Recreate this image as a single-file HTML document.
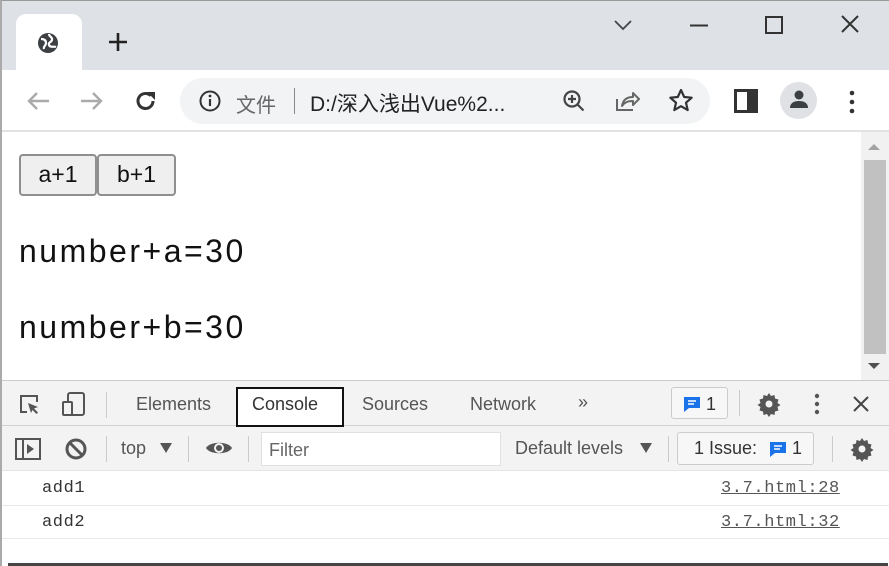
<!DOCTYPE html>
<html><head><meta charset="utf-8"><style>
*{margin:0;padding:0;box-sizing:border-box}
body{width:889px;height:566px;overflow:hidden;background:#fff;font-family:"Liberation Sans","Noto Sans CJK SC",sans-serif;position:relative}
.a{position:absolute}
svg{position:absolute;overflow:visible}
.t{color:#555;font-size:18px}
.m{font-family:'Liberation Mono',monospace;font-size:17px;letter-spacing:0.6px}
</style></head><body>
<div class="a" style="left:0;top:0;width:889px;height:70px;background:#dee1e6"></div>
<div class="a" style="left:0;top:0;width:889px;height:1px;background:#999"></div>
<div class="a" style="left:0;top:0;width:2px;height:566px;background:#aaa;z-index:5"></div>
<div class="a" style="left:16px;top:14px;width:66px;height:60px;background:#fff;border-radius:10px 10px 0 0"></div>
<svg style="left:37px;top:32px" width="22" height="22" viewBox="0 0 22 22"><circle cx="11" cy="11" r="10" fill="#3c4043"/><path d="M4 7c3 0 5 1 5 4s-3 3-2 6M12 2c0 3 4 3 3 6s-4 2-3 5 5 1 7 2" stroke="#fff" stroke-width="2.2" fill="none"/></svg>
<svg style="left:108px;top:32px" width="20" height="20"><path d="M10 1v18M1 10h18" stroke="#222" stroke-width="2.6"/></svg>
<svg style="left:613px;top:19px" width="20" height="12"><path d="M2 2l8 8 8-8" stroke="#444" stroke-width="1.8" fill="none"/></svg>
<svg style="left:690px;top:24px" width="18" height="4"><path d="M0 1.5h18" stroke="#333" stroke-width="2"/></svg>
<svg style="left:765px;top:16px" width="18" height="18"><rect x="1" y="1" width="16" height="16" stroke="#333" stroke-width="2" fill="none"/></svg>
<svg style="left:841px;top:15px" width="18" height="18"><path d="M1 1l16 16M17 1L1 17" stroke="#333" stroke-width="2"/></svg>
<div class="a" style="left:0;top:130px;width:889px;height:2px;background:#e2e2e2"></div>
<svg style="left:26px;top:91px" width="24" height="20"><path d="M23 10H3M11 2l-8 8 8 8" stroke="#aaa" stroke-width="2.4" fill="none"/></svg>
<svg style="left:80px;top:91px" width="24" height="20"><path d="M1 10h20M13 2l8 8-8 8" stroke="#aaa" stroke-width="2.4" fill="none"/></svg>
<svg style="left:134px;top:89px" width="24" height="24"><path d="M19 12a7.5 7.5 0 1 1-2.2-5.3" stroke="#333" stroke-width="3" fill="none"/><path d="M13 3h8v8z" fill="#333"/></svg>
<div class="a" style="left:180px;top:78px;width:530px;height:46px;background:#f1f3f4;border-radius:23px"></div>
<svg style="left:199px;top:90px" width="22" height="22"><circle cx="11" cy="11" r="9.5" stroke="#333" stroke-width="2" fill="none"/><path d="M11 9v7" stroke="#333" stroke-width="2.2"/><circle cx="11" cy="6" r="1.4" fill="#333"/></svg>
<div class="a t" style="left:236px;top:89px;font-size:20px;color:#666">文件</div>
<div class="a" style="left:294px;top:88px;width:1px;height:26px;background:#888"></div>
<div class="a" style="left:310px;top:88px;font-size:21px;color:#222">D:/深入浅出Vue%2...</div>
<svg style="left:562px;top:89px" width="26" height="26"><circle cx="10" cy="10" r="7.5" stroke="#444" stroke-width="2.2" fill="none"/><path d="M15.5 15.5l6 6M10 6v8M6 10h8" stroke="#444" stroke-width="2.2"/></svg>
<svg style="left:615px;top:89px" width="26" height="24"><path d="M2 10v11h16" stroke="#666" stroke-width="2" fill="none"/><path d="M7 17c1-6 5-9 11-9V4l6 6-6 6v-4c-5 0-8 1-11 5z" stroke="#666" stroke-width="2" fill="none" stroke-linejoin="round"/></svg>
<svg style="left:668px;top:88px" width="26" height="26"><path d="M13 2l3.2 7 7.5.7-5.7 5 1.7 7.4L13 18.2l-6.7 3.9L8 14.7l-5.7-5 7.5-.7z" stroke="#333" stroke-width="2.2" fill="none" stroke-linejoin="round"/></svg>
<svg style="left:734px;top:89px" width="24" height="24"><rect x="1.5" y="1.5" width="21" height="21" stroke="#333" stroke-width="3" fill="none"/><rect x="13" y="2" width="9" height="20" fill="#333"/></svg>
<div class="a" style="left:780px;top:82px;width:37px;height:37px;border-radius:50%;background:#dfe1e5"></div>
<svg style="left:789px;top:89px" width="20" height="20"><circle cx="10" cy="6" r="4.5" fill="#3c4043"/><path d="M1 19c0-5 4-7 9-7s9 2 9 7z" fill="#3c4043"/></svg>
<svg style="left:849px;top:90px" width="6" height="24"><circle cx="3" cy="3" r="2.3" fill="#333"/><circle cx="3" cy="12" r="2.3" fill="#333"/><circle cx="3" cy="21" r="2.3" fill="#333"/></svg>
<div class="a" style="left:19px;top:154px;width:78px;height:42px;background:#efefef;border:2px solid #8f8f8f;border-radius:4px;font-size:23px;color:#111;text-align:center;line-height:36px">a+1</div>
<div class="a" style="left:97px;top:154px;width:79px;height:42px;background:#efefef;border:2px solid #8f8f8f;border-radius:4px;font-size:23px;color:#111;text-align:center;line-height:36px">b+1</div>
<div class="a" style="left:19px;top:233px;font-size:32px;color:#111;letter-spacing:2.5px">number+a=30</div>
<div class="a" style="left:19px;top:309px;font-size:32px;color:#111;letter-spacing:2.5px">number+b=30</div>
<div class="a" style="left:861px;top:132px;width:28px;height:248px;background:#f1f1f1"></div>
<div class="a" style="left:864px;top:160px;width:22px;height:194px;background:#c1c1c1"></div>
<svg style="left:868px;top:143px" width="12" height="8"><path d="M0 7L6 1l6 6z" fill="#a3a3a3"/></svg>
<svg style="left:868px;top:362px" width="12" height="8"><path d="M0 1l6 6 6-6z" fill="#505050"/></svg>
<div class="a" style="left:0;top:380px;width:889px;height:1px;background:#ccc"></div>
<div class="a" style="left:0;top:381px;width:889px;height:89px;background:#f3f3f3"></div>
<div class="a" style="left:0;top:425px;width:889px;height:1px;background:#d0d0d0"></div>
<div class="a" style="left:0;top:470px;width:889px;height:1px;background:#e4e4e4"></div>
<svg style="left:18px;top:393px" width="24" height="24"><path d="M9 19H3V3h16v6" stroke="#555" stroke-width="2" fill="none"/><path d="M10 10l10 4-4 1.5 4 4-1.5 1.5-4-4L13 20z" fill="#555"/></svg>
<svg style="left:61px;top:391px" width="26" height="26"><rect x="7" y="2" width="16" height="22" rx="2" stroke="#555" stroke-width="2" fill="none"/><rect x="2" y="11" width="9" height="13" rx="1" stroke="#555" stroke-width="2" fill="#f3f3f3"/></svg>
<div class="a" style="left:106px;top:392px;width:1px;height:26px;background:#ccc"></div>
<div class="a t" style="left:136px;top:394px">Elements</div>
<div class="a" style="left:236px;top:387px;width:108px;height:40px;border:2px solid #111;background:#fff"></div>
<div class="a t" style="left:252px;top:394px;color:#333">Console</div>
<div class="a t" style="left:362px;top:394px">Sources</div>
<div class="a t" style="left:470px;top:394px">Network</div>
<div class="a t" style="left:578px;top:392px">»</div>
<div class="a" style="left:671px;top:387px;width:57px;height:32px;border:1px solid #ccc;border-radius:3px;background:#f7f7f7"></div>
<svg style="left:683px;top:395px" width="18" height="17"><path d="M1 2h16v11H6l-5 4z" fill="#1a73e8"/><path d="M5 6h8M5 9h6" stroke="#fff" stroke-width="1.5"/></svg>
<div class="a t" style="left:706px;top:394px;color:#333">1</div>
<div class="a" style="left:739px;top:390px;width:1px;height:26px;background:#ccc"></div>
<svg style="left:757px;top:392px" width="24" height="24" viewBox="0 0 24 24"><path d="M12 1l2 3 3.5-1 .5 3.5 3.5 1-1 3.5 3 2-3 2 1 3.5-3.5 1-.5 3.5-3.5-1-2 3-2-3-3.5 1-.5-3.5-3.5-1 1-3.5-3-2 3-2-1-3.5 3.5-1 .5-3.5 3.5 1z" fill="#555"/><circle cx="12" cy="12" r="3.5" fill="#f3f3f3"/></svg>
<svg style="left:814px;top:393px" width="6" height="22"><circle cx="3" cy="3" r="2.2" fill="#555"/><circle cx="3" cy="11" r="2.2" fill="#555"/><circle cx="3" cy="19" r="2.2" fill="#555"/></svg>
<svg style="left:853px;top:396px" width="16" height="16"><path d="M1 1l14 14M15 1L1 15" stroke="#444" stroke-width="2"/></svg>
<svg style="left:15px;top:438px" width="26" height="22"><rect x="1" y="1" width="24" height="20" stroke="#555" stroke-width="2" fill="none"/><path d="M8 1v20" stroke="#555" stroke-width="2"/><path d="M12 6l7 5-7 5z" fill="#555"/></svg>
<svg style="left:64px;top:437px" width="24" height="24"><circle cx="12" cy="12" r="9" stroke="#555" stroke-width="3" fill="none"/><path d="M6 6l12 12" stroke="#555" stroke-width="3"/></svg>
<div class="a" style="left:106px;top:436px;width:1px;height:26px;background:#ccc"></div>
<div class="a t" style="left:121px;top:438px">top</div>
<svg style="left:160px;top:443px" width="12" height="10"><path d="M0 0h12L6 10z" fill="#555"/></svg>
<div class="a" style="left:188px;top:436px;width:1px;height:26px;background:#ccc"></div>
<svg style="left:205px;top:439px" width="28" height="18"><path d="M1 9C5 2 23 2 27 9 23 16 5 16 1 9z" fill="#555"/><circle cx="14" cy="9" r="5" fill="#f3f3f3"/><circle cx="14" cy="9" r="3" fill="#555"/></svg>
<div class="a" style="left:248px;top:436px;width:1px;height:26px;background:#ccc"></div>
<div class="a" style="left:261px;top:432px;width:240px;height:34px;background:#fff;border:1px solid #e0e0e0"></div>
<div class="a t" style="left:269px;top:440px;color:#666">Filter</div>
<div class="a t" style="left:515px;top:438px">Default levels</div>
<svg style="left:640px;top:443px" width="12" height="10"><path d="M0 0h12L6 10z" fill="#555"/></svg>
<div class="a" style="left:668px;top:436px;width:1px;height:26px;background:#ccc"></div>
<div class="a" style="left:677px;top:432px;width:137px;height:33px;border:1px solid #ccc;border-radius:3px;background:#f7f7f7"></div>
<div class="a t" style="left:694px;top:438px;color:#333">1 Issue:</div>
<svg style="left:769px;top:440px" width="18" height="17"><path d="M1 2h16v11H6l-5 4z" fill="#1a73e8"/><path d="M5 6h8M5 9h6" stroke="#fff" stroke-width="1.5"/></svg>
<div class="a t" style="left:792px;top:438px;color:#333">1</div>
<div class="a" style="left:832px;top:436px;width:1px;height:26px;background:#ccc"></div>
<svg style="left:850px;top:437px" width="24" height="24" viewBox="0 0 24 24"><path d="M12 1l2 3 3.5-1 .5 3.5 3.5 1-1 3.5 3 2-3 2 1 3.5-3.5 1-.5 3.5-3.5-1-2 3-2-3-3.5 1-.5-3.5-3.5-1 1-3.5-3-2 3-2-1-3.5 3.5-1 .5-3.5 3.5 1z" fill="#555"/><circle cx="12" cy="12" r="3.5" fill="#f3f3f3"/></svg>
<div class="a m" style="left:42px;top:479px;color:#333">add1</div>
<div class="a m" style="left:721px;top:479px;color:#555;text-decoration:underline">3.7.html:28</div>
<div class="a" style="left:0;top:505px;width:889px;height:1px;background:#e8e8e8"></div>
<div class="a m" style="left:42px;top:513px;color:#333">add2</div>
<div class="a m" style="left:721px;top:513px;color:#555;text-decoration:underline">3.7.html:32</div>
<div class="a" style="left:0;top:538px;width:889px;height:1px;background:#e8e8e8"></div>
<div class="a" style="left:8px;top:563px;width:880px;height:3px;background:#444"></div>
</body></html>
